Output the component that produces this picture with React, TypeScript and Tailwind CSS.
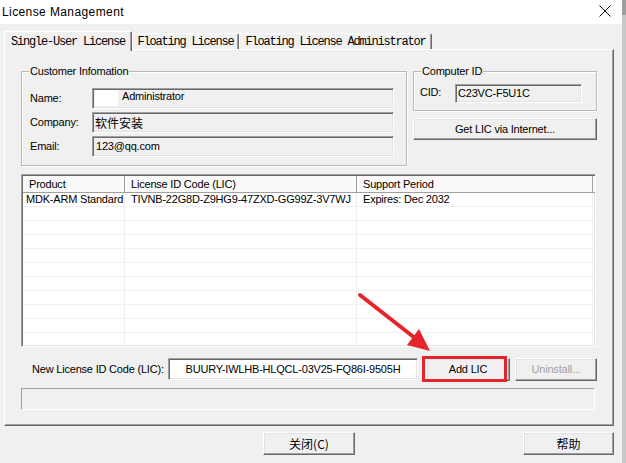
const ui = "font-['Liberation_Sans','Noto_Sans_CJK_SC',sans-serif]";
const cjk = "font-['Noto_Sans_CJK_SC','Liberation_Sans',sans-serif]";
const mono = "font-['Liberation_Mono',monospace]";

const sunken =
  "border border-t-[#a0a0a0] border-l-[#a0a0a0] border-r-white border-b-white shadow-[inset_1px_1px_0_#696969,inset_-1px_-1px_0_#e3e3e3]";
const raised =
  "border border-t-white border-l-white border-r-[#696969] border-b-[#696969] shadow-[inset_-1px_-1px_0_#a0a0a0,inset_1px_1px_0_#e3e3e3] bg-[#f0f0f0]";
const etched = "border border-[#b9b9b9] shadow-[inset_1px_1px_0_#fff,1px_1px_0_#fff]";

const rows = [
  ["MDK-ARM Standard", "TIVNB-22G8D-Z9HG9-47ZXD-GG99Z-3V7WJ", "Expires: Dec 2032"],
  ...Array.from({ length: 10 }, () => ["", "", ""]),
];

function Tab({ label, active, w }: { label: string; active?: boolean; w: string }) {
  return (
    <div
      className={`flex shrink-0 items-center justify-center rounded-t-[2px] border border-b-0 border-t-white border-l-white border-r-[#696969] bg-[#f0f0f0] shadow-[inset_-1px_0_0_#a0a0a0] ${w} ${
        active ? "relative z-10 h-[20px]" : "mt-[2px] h-[16px]"
      }`}
    >
      <span className={`${mono} text-[12px] tracking-[-1.2px] leading-none`}>{label}</span>
    </div>
  );
}

function Field({ label, children }: { label: string; children: React.ReactNode }) {
  return (
    <div className="flex h-[21px] items-center">
      <span className="w-[70px] shrink-0 pl-[8px]">{label}</span>
      <div className={`flex h-[21px] w-[302px] shrink-0 items-center pl-[2px] ${sunken}`}>{children}</div>
    </div>
  );
}

export default function App() {
  return (
    <div
      className={`relative flex h-[463px] w-[626px] overflow-hidden whitespace-nowrap bg-[#f0f0f0] text-[11px] tracking-[-0.2px] text-black ${ui}`}
    >
      <div className="flex w-[622px] shrink-0 flex-col">
        <div className="flex h-[24px] items-center justify-between bg-white pl-[2px] pr-[11px]">
          <span className="text-[12px] tracking-[0.4px]">License Management</span>
          <svg width="12" height="12" viewBox="0 0 12 12" className="mt-[-2px]">
            <path d="M0.5 0.5 L11.5 11.5 M11.5 0.5 L0.5 11.5" stroke="#111" strokeWidth="1" fill="none" />
          </svg>
        </div>

        <div className="flex flex-col px-[4px] pt-[7px]">
          <div className="flex h-[18px] items-start">
            <Tab label="Single-User License" active w="w-[128px]" />
            <Tab label="Floating License" w="w-[107px]" />
            <Tab label="Floating License Administrator" w="w-[193px]" />
          </div>

          <div className="flex h-[377px] w-[610px] flex-col border border-t-white border-l-white border-r-[#696969] border-b-[#696969] pl-[16px] pt-[21px] shadow-[inset_-1px_-1px_0_#a0a0a0]">
            <div className="flex gap-[6px]">
              <div className={`relative h-[95px] w-[386px] shrink-0 pt-[16px] ${etched}`}>
                <span className="absolute -top-[7px] left-[7px] bg-[#f0f0f0] px-[1px] leading-[13px]">
                  Customer Infomation
                </span>
                <div className="flex flex-col gap-[3px]">
                  <Field label="Name:">
                    <div className="mt-[1px] h-[16px] w-[23px] self-start bg-white" />
                    <span className="-mt-[4px] ml-[4px]">Administrator</span>
                  </Field>
                  <Field label="Company:">
                    <span className={`${cjk} text-[12px] tracking-normal`}>软件安装</span>
                  </Field>
                  <Field label="Email:">
                    <span className="ml-[1px]">123@qq.com</span>
                  </Field>
                </div>
              </div>

              <div className="flex w-[184px] shrink-0 flex-col">
                <div className={`relative flex h-[40px] items-start pt-[12px] ${etched}`}>
                  <span className="absolute -top-[7px] left-[7px] bg-[#f0f0f0] px-[1px] leading-[13px]">
                    Computer ID
                  </span>
                  <span className="w-[41px] shrink-0 pl-[6px] leading-[17px]">CID:</span>
                  <div className={`flex h-[19px] w-[127px] shrink-0 items-center pl-[2px] ${sunken}`}>
                    C23VC-F5U1C
                  </div>
                </div>
                <div className={`mt-[7px] flex h-[22px] items-center justify-center ${raised}`}>
                  Get LIC via Internet...
                </div>
              </div>
            </div>

            <div className={`mt-[8px] flex h-[173px] w-[575px] flex-col overflow-hidden bg-white ${sunken}`}>
              <div className="ml-[1px] mt-[1px] flex h-[17px] shrink-0 border-b border-b-[#a0a0a0] bg-[#f9f9f9]">
                <div className="flex w-[102px] shrink-0 items-center border-r border-r-[#a0a0a0] pl-[6px]">Product</div>
                <div className="flex w-[232px] shrink-0 items-center border-r border-r-[#a0a0a0] pl-[6px]">
                  License ID Code (LIC)
                </div>
                <div className="flex w-[236px] shrink-0 items-center border-r border-r-[#a0a0a0] pl-[6px]">
                  Support Period
                </div>
              </div>
              {rows.map((r, i) => (
                <div key={i} className="ml-[1px] flex h-[14px] shrink-0 border-b border-b-[#f0f0f0]">
                  <div className="flex w-[102px] shrink-0 items-center overflow-hidden border-r border-r-[#f0f0f0] pl-[3px]">
                    {r[0]}
                  </div>
                  <div className="flex w-[232px] shrink-0 items-center overflow-hidden border-r border-r-[#f0f0f0] pl-[6px]">
                    {r[1]}
                  </div>
                  <div className="flex w-[236px] shrink-0 items-center border-r border-r-[#f0f0f0] pl-[6px]">
                    {r[2]}
                  </div>
                </div>
              ))}
            </div>

            <div className="mt-[10px] flex h-[24px] items-center">
              <span className="w-[147px] shrink-0 pl-[11px]">New License ID Code (LIC):</span>
              <div className={`flex h-[22px] w-[250px] shrink-0 items-center justify-center bg-white ${sunken}`}>
                BUURY-IWLHB-HLQCL-03V25-FQ86I-9505H
              </div>
              <div className="relative ml-[8px] shrink-0">
                <div className={`flex h-[23px] w-[84px] items-center justify-center ${raised}`}>Add LIC</div>
                <div className="absolute -left-[4px] -top-[2px] h-[26px] w-[85px] border-[3px] border-[#e5252c]" />
              </div>
              <div
                className={`ml-[5px] flex h-[23px] w-[82px] shrink-0 items-center justify-center text-[#a0a0a0] ${raised}`}
              >
                Uninstall...
              </div>
            </div>

            <div className={`mt-[7px] h-[22px] w-[574px] ${sunken} shadow-none`} />
          </div>

          <div className={`mt-[6px] flex h-[23px] text-[12px] tracking-normal ${cjk}`}>
            <div className={`ml-[259px] flex w-[92px] shrink-0 items-center justify-center ${raised}`}>关闭(C)</div>
            <div className={`ml-[168px] flex w-[91px] shrink-0 items-center justify-center ${raised}`}>帮助</div>
          </div>
        </div>
      </div>

      <div className="flex w-[4px] flex-col">
        <div className="h-[15px] bg-[#9e9e9e]" />
        <div className="flex-1 bg-[#c9c9c9]" />
      </div>

      <svg className="pointer-events-none absolute left-0 top-0" width="626" height="463" viewBox="0 0 626 463">
        <line x1="360" y1="295" x2="420" y2="342" stroke="#e5252c" strokeWidth="4" strokeLinecap="round" />
        <polygon points="430,351 419,329 407,345" fill="#e5252c" />
      </svg>
    </div>
  );
}
